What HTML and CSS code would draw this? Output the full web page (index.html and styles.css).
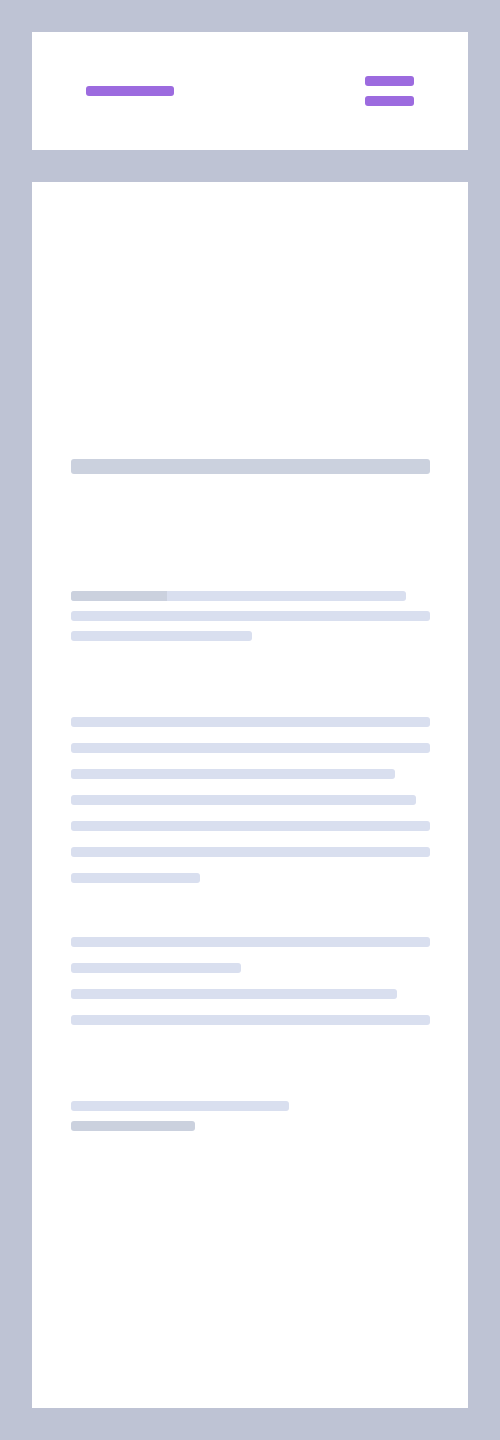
FILE: index.html
```html
<!DOCTYPE html>
<html>
<head>
<meta charset="utf-8">
<link rel="stylesheet" href="styles.css">
</head>
<body>
<div class="page">
  <header class="header">
    <div class="logo"></div>
    <div class="menu">
      <span class="menu-bar"></span>
      <span class="menu-bar"></span>
    </div>
  </header>
  <main class="card">
    <div class="title"></div>
    <div class="group tight intro">
      <div class="line" style="width:335px"><span class="line-hl" style="width:96px"></span></div>
      <div class="line" style="width:359px"></div>
      <div class="line" style="width:181px"></div>
    </div>
    <div class="group loose para1">
      <div class="line" style="width:359px"></div>
      <div class="line" style="width:359px"></div>
      <div class="line" style="width:324px"></div>
      <div class="line" style="width:345px"></div>
      <div class="line" style="width:359px"></div>
      <div class="line" style="width:359px"></div>
      <div class="line" style="width:129px"></div>
    </div>
    <div class="group loose para2">
      <div class="line" style="width:359px"></div>
      <div class="line" style="width:170px"></div>
      <div class="line" style="width:326px"></div>
      <div class="line" style="width:359px"></div>
    </div>
    <div class="group tight footer">
      <div class="line" style="width:218px"></div>
      <div class="line dark" style="width:124px"></div>
    </div>
  </main>
</div>
</body>
</html>
```
FILE: styles.css
```css
html, body {
  margin: 0;
  padding: 0;
}
body {
  background: #bec3d4;
  font-family: "Liberation Sans", Arial, sans-serif;
}
.page {
  width: 500px;
  height: 1440px;
  box-sizing: border-box;
  padding: 32px;
  display: flex;
  flex-direction: column;
  gap: 32px;
}
.header {
  background: #ffffff;
  height: 118px;
  box-sizing: border-box;
  padding: 0 54px;
  display: flex;
  align-items: center;
  justify-content: space-between;
  flex-shrink: 0;
}
.logo {
  width: 88px;
  height: 10px;
  border-radius: 3px;
  background: #9c6bdf;
}
.menu {
  display: flex;
  flex-direction: column;
  gap: 10px;
}
.menu-bar {
  display: block;
  width: 49px;
  height: 10px;
  border-radius: 3px;
  background: #9c6bdf;
}
.card {
  background: #ffffff;
  flex: 1;
  box-sizing: border-box;
  padding: 277px 38px 0 39px;
  display: flex;
  flex-direction: column;
}
.title {
  width: 359px;
  height: 15px;
  border-radius: 3px;
  background: #cbd1de;
}
.group {
  display: flex;
  flex-direction: column;
}
.tight { gap: 10px; }
.loose { gap: 16px; }
.intro { margin-top: 117px; }
.para1 { margin-top: 76px; }
.para2 { margin-top: 54px; }
.footer { margin-top: 76px; }
.line {
  height: 10px;
  border-radius: 3px;
  background: #d9dfef;
  overflow: hidden;
  display: flex;
}
.line.dark {
  background: #cbd1de;
}
.line-hl {
  display: block;
  height: 100%;
  background: #cbd1de;
}
```
